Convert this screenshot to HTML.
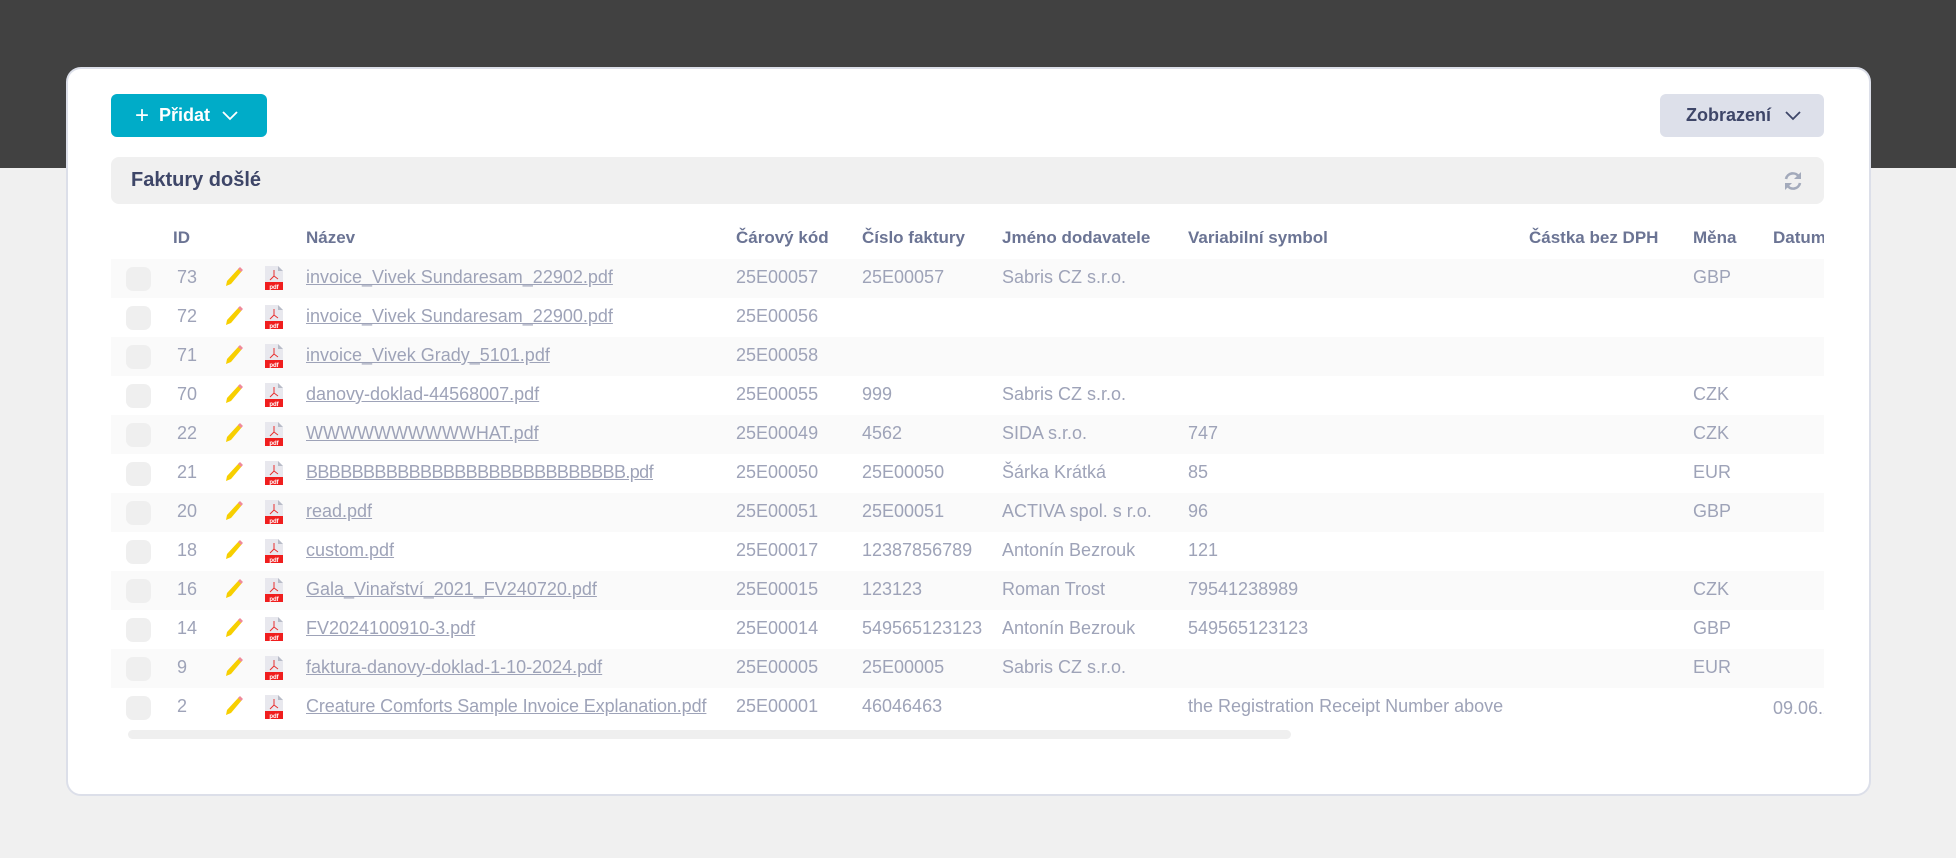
<!DOCTYPE html>
<html><head><meta charset="utf-8"><style>
*{margin:0;padding:0;box-sizing:border-box}
body{width:1956px;height:858px;background:#f0f0f0;font-family:"Liberation Sans",sans-serif;position:relative;overflow:hidden}
.band{position:absolute;left:0;top:0;width:1956px;height:168px;background:#414141}
.card{position:absolute;left:66px;top:67px;width:1805px;height:729px;background:#fff;border:2px solid #dcdfe9;border-radius:15px}
.btn{position:absolute;top:94px;height:43px;border-radius:6px;font-size:18px;font-weight:bold;display:flex;align-items:center}
.add{left:111px;width:156px;background:#00acc8;color:#fff;padding-left:24px}
.view{left:1660px;width:164px;background:#dde0ea;color:#3e4668;padding-left:26px}
.bar{position:absolute;left:111px;top:157px;width:1713px;height:47px;background:#f0f0f0;border-radius:8px}
.bar span{position:absolute;left:20px;top:12px;font-size:20px;color:#3e4668;font-weight:600}
.tbl{position:absolute;left:111px;top:214px;width:1713px;height:530px;overflow:hidden}
.h{position:absolute;top:14px;font-size:17px;font-weight:bold;color:#6b7494;white-space:nowrap}
.r{position:absolute;left:0;width:1713px;height:39px}
.r.o{background:#fafafa}
.r span{position:absolute;top:8px;font-size:18px;color:#9ea3b8;white-space:nowrap}
.r span.n{text-decoration:underline}
.cb{position:absolute;left:15px;top:8px;width:25px;height:24px;border-radius:7px;background:#efefef}
.pe{position:absolute;left:112px;top:7px}
.pdf{position:absolute;left:153px;top:7px}
.sb{position:absolute;left:128px;top:730px;width:1163px;height:9px;border-radius:5px;background:#efefef}
</style></head><body>
<div class="band"></div>
<div class="card"></div>
<div class="btn add"><span style="font-size:24px;font-weight:normal;margin-right:10px">+</span>Přidat<svg width="16" height="10" style="margin-left:12px" viewBox="0 0 16 10"><path d="M1 1l7 7 7-7" fill="none" stroke="#fff" stroke-width="1.8"/></svg></div>
<div class="btn view">Zobrazení<svg width="16" height="10" style="margin-left:14px" viewBox="0 0 16 10"><path d="M1 1l7 7 7-7" fill="none" stroke="#3e4668" stroke-width="1.8"/></svg></div>
<div class="bar"><span>Faktury došlé</span>
<svg style="position:absolute;left:1671px;top:13px" width="22" height="22" viewBox="0 0 22 22"><path d="M4 9a7 7 0 0 1 13-2M18 13a7 7 0 0 1-13 2" fill="none" stroke="#a3aabb" stroke-width="2.6"/><path d="M19 2v7h-7z M3 20v-7h7z" fill="#a3aabb"/></svg></div>
<div class="tbl">
<div class="h" style="left:62px">ID</div>
<div class="h" style="left:195px">Název</div>
<div class="h" style="left:625px">Čárový kód</div>
<div class="h" style="left:751px">Číslo faktury</div>
<div class="h" style="left:891px">Jméno dodavatele</div>
<div class="h" style="left:1077px">Variabilní symbol</div>
<div class="h" style="left:1418px">Částka bez DPH</div>
<div class="h" style="left:1582px">Měna</div>
<div class="h" style="left:1662px">Datum</div>
</div>
<div class="tbl" style="top:259px">
<svg width="0" height="0" style="position:absolute"><defs>
<g id="pen"><path d="M16 2l3 3-11 13-5 2 1-5z" fill="#f7cf00"/><path d="M15 3l2-2 3 3-2 2z" fill="#f08a9a"/></g>
<g id="pd"><path d="M1 0h13l5 5v19H1z" fill="#e8e8ee"/><path d="M14 0v5h5z" fill="#b8bcc8"/><rect x="1" y="16" width="18" height="8" fill="#f01e1e"/><text x="10" y="23" font-size="6" fill="#fff" text-anchor="middle" font-family="Liberation Sans" font-weight="bold">pdf</text><path d="M10 4v6l-4 4M10 10l4 3" fill="none" stroke="#e83030" stroke-width="1"/></g>
</defs></svg>
<div class="r o" style="top:0"><div class="cb"></div><span style="left:66px">73</span><svg class="pe" width="22" height="22"><use href="#pen"/></svg><svg class="pdf" width="20" height="24"><use href="#pd"/></svg><span class="n" style="left:195px">invoice_Vivek Sundaresam_22902.pdf</span><span style="left:625px">25E00057</span><span style="left:751px">25E00057</span><span style="left:891px">Sabris CZ s.r.o.</span><span style="left:1582px">GBP</span></div>
<div class="r" style="top:39px"><div class="cb"></div><span style="left:66px">72</span><svg class="pe" width="22" height="22"><use href="#pen"/></svg><svg class="pdf" width="20" height="24"><use href="#pd"/></svg><span class="n" style="left:195px">invoice_Vivek Sundaresam_22900.pdf</span><span style="left:625px">25E00056</span></div>
<div class="r o" style="top:78px"><div class="cb"></div><span style="left:66px">71</span><svg class="pe" width="22" height="22"><use href="#pen"/></svg><svg class="pdf" width="20" height="24"><use href="#pd"/></svg><span class="n" style="left:195px">invoice_Vivek Grady_5101.pdf</span><span style="left:625px">25E00058</span></div>
<div class="r" style="top:117px"><div class="cb"></div><span style="left:66px">70</span><svg class="pe" width="22" height="22"><use href="#pen"/></svg><svg class="pdf" width="20" height="24"><use href="#pd"/></svg><span class="n" style="left:195px">danovy-doklad-44568007.pdf</span><span style="left:625px">25E00055</span><span style="left:751px">999</span><span style="left:891px">Sabris CZ s.r.o.</span><span style="left:1582px">CZK</span></div>
<div class="r o" style="top:156px"><div class="cb"></div><span style="left:66px">22</span><svg class="pe" width="22" height="22"><use href="#pen"/></svg><svg class="pdf" width="20" height="24"><use href="#pd"/></svg><span class="n" style="left:195px">WWWWWWWWWWHAT.pdf</span><span style="left:625px">25E00049</span><span style="left:751px">4562</span><span style="left:891px">SIDA s.r.o.</span><span style="left:1077px">747</span><span style="left:1582px">CZK</span></div>
<div class="r" style="top:195px"><div class="cb"></div><span style="left:66px">21</span><svg class="pe" width="22" height="22"><use href="#pen"/></svg><svg class="pdf" width="20" height="24"><use href="#pd"/></svg><span class="n" style="left:195px;letter-spacing:-0.6px">BBBBBBBBBBBBBBBBBBBBBBBBBBBB.pdf</span><span style="left:625px">25E00050</span><span style="left:751px">25E00050</span><span style="left:891px">Šárka Krátká</span><span style="left:1077px">85</span><span style="left:1582px">EUR</span></div>
<div class="r o" style="top:234px"><div class="cb"></div><span style="left:66px">20</span><svg class="pe" width="22" height="22"><use href="#pen"/></svg><svg class="pdf" width="20" height="24"><use href="#pd"/></svg><span class="n" style="left:195px">read.pdf</span><span style="left:625px">25E00051</span><span style="left:751px">25E00051</span><span style="left:891px">ACTIVA spol. s r.o.</span><span style="left:1077px">96</span><span style="left:1582px">GBP</span></div>
<div class="r" style="top:273px"><div class="cb"></div><span style="left:66px">18</span><svg class="pe" width="22" height="22"><use href="#pen"/></svg><svg class="pdf" width="20" height="24"><use href="#pd"/></svg><span class="n" style="left:195px">custom.pdf</span><span style="left:625px">25E00017</span><span style="left:751px">12387856789</span><span style="left:891px">Antonín Bezrouk</span><span style="left:1077px">121</span></div>
<div class="r o" style="top:312px"><div class="cb"></div><span style="left:66px">16</span><svg class="pe" width="22" height="22"><use href="#pen"/></svg><svg class="pdf" width="20" height="24"><use href="#pd"/></svg><span class="n" style="left:195px">Gala_Vinařství_2021_FV240720.pdf</span><span style="left:625px">25E00015</span><span style="left:751px">123123</span><span style="left:891px">Roman Trost</span><span style="left:1077px">79541238989</span><span style="left:1582px">CZK</span></div>
<div class="r" style="top:351px"><div class="cb"></div><span style="left:66px">14</span><svg class="pe" width="22" height="22"><use href="#pen"/></svg><svg class="pdf" width="20" height="24"><use href="#pd"/></svg><span class="n" style="left:195px">FV2024100910-3.pdf</span><span style="left:625px">25E00014</span><span style="left:751px">549565123123</span><span style="left:891px">Antonín Bezrouk</span><span style="left:1077px">549565123123</span><span style="left:1582px">GBP</span></div>
<div class="r o" style="top:390px"><div class="cb"></div><span style="left:66px">9</span><svg class="pe" width="22" height="22"><use href="#pen"/></svg><svg class="pdf" width="20" height="24"><use href="#pd"/></svg><span class="n" style="left:195px">faktura-danovy-doklad-1-10-2024.pdf</span><span style="left:625px">25E00005</span><span style="left:751px">25E00005</span><span style="left:891px">Sabris CZ s.r.o.</span><span style="left:1582px">EUR</span></div>
<div class="r" style="top:429px"><div class="cb"></div><span style="left:66px">2</span><svg class="pe" width="22" height="22"><use href="#pen"/></svg><svg class="pdf" width="20" height="24"><use href="#pd"/></svg><span class="n" style="left:195px;letter-spacing:-0.1px">Creature Comforts Sample Invoice Explanation.pdf</span><span style="left:625px">25E00001</span><span style="left:751px">46046463</span><span style="left:1077px">the Registration Receipt Number above</span><span style="left:1662px;top:10px">09.06.2024</span></div>
</div>
<div class="sb"></div>
</body></html>
